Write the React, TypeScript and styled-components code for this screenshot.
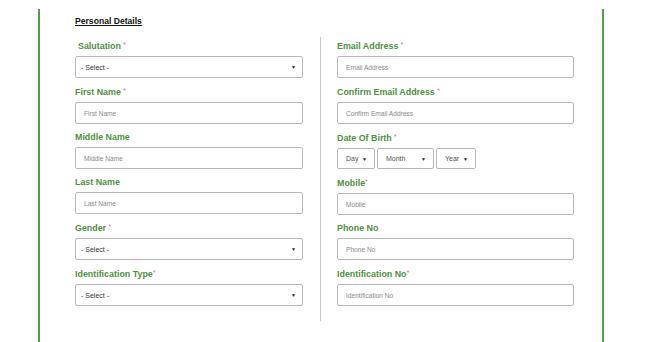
import styled, { createGlobalStyle } from "styled-components";

const GlobalStyle = createGlobalStyle`
  body {
    margin: 0;
    background: #ffffff;
    font-family: "Liberation Sans", Arial, sans-serif;
  }
`;

interface Field {
  label: string;
  required?: "spaced" | "tight";
  kind: "input" | "select" | "dob";
}

const leftFields: Field[] = [
  { label: "Salutation", required: "spaced", kind: "select" },
  { label: "First Name", required: "spaced", kind: "input" },
  { label: "Middle Name", kind: "input" },
  { label: "Last Name", kind: "input" },
  { label: "Gender", required: "spaced", kind: "select" },
  { label: "Identification Type", required: "tight", kind: "select" },
];

const rightFields: Field[] = [
  { label: "Email Address", required: "spaced", kind: "input" },
  { label: "Confirm Email Address", required: "spaced", kind: "input" },
  { label: "Date Of Birth", required: "spaced", kind: "dob" },
  { label: "Mobile", required: "tight", kind: "input" },
  { label: "Phone No", kind: "input" },
  { label: "Identification No", required: "tight", kind: "input" },
];

const dobParts = [
  { text: "Day", width: 38 },
  { text: "Month", width: 57 },
  { text: "Year", width: 40 },
];

const FieldGroup = ({ field, indent }: { field: Field; indent?: boolean }) => (
  <Group>
    <Label indent={indent}>
      {field.label}
      {field.required && (
        <Star>{field.required === "spaced" ? " *" : "*"}</Star>
      )}
    </Label>
    {field.kind === "input" && <TextInput placeholder={field.label} />}
    {field.kind === "select" && (
      <SelectBox>
        <SelectText>- Select -</SelectText>
        <Caret>▼</Caret>
      </SelectBox>
    )}
    {field.kind === "dob" && (
      <DobRow>
        {dobParts.map((part) => (
          <DobSelect key={part.text} style={{ width: part.width }}>
            <DobText>{part.text}</DobText>
            <Caret>▼</Caret>
          </DobSelect>
        ))}
      </DobRow>
    )}
  </Group>
);

const App = () => {
  return (
    <>
      <GlobalStyle />
      <Panel>
        <Heading>Personal Details</Heading>
        <Columns>
          <LeftColumn>
            {leftFields.map((f, i) => (
              <FieldGroup key={f.label} field={f} indent={i === 0} />
            ))}
          </LeftColumn>
          <Divider />
          <RightColumn>
            {rightFields.map((f) => (
              <FieldGroup key={f.label} field={f} />
            ))}
          </RightColumn>
        </Columns>
      </Panel>
    </>
  );
};

export default App;

const Panel = styled.div`
  margin: 9px 0 0 38px;
  width: 527px;
  min-height: 333px;
  border-left: 2px solid #5a9a4e;
  border-right: 2px solid #5a9a4e;
  padding: 7px 0 0 35px;
  box-sizing: content-box;
  display: flex;
  flex-direction: column;
`;

const Heading = styled.div`
  font-size: 8.6px;
  line-height: 11px;
  font-weight: bold;
  color: #111;
  text-decoration: underline;
  margin-bottom: 10px;
`;

const Columns = styled.div`
  display: flex;
  align-items: stretch;
`;

const LeftColumn = styled.div`
  width: 228px;
  padding: 2px 0 15px;
  display: flex;
  flex-direction: column;
  gap: 7px;
`;

const RightColumn = styled(LeftColumn)`
  width: 237px;
`;

const Divider = styled.div`
  width: 1px;
  background: #c8c8c8;
  margin: 0 16px 0 17px;
`;

const Group = styled.div`
  display: flex;
  flex-direction: column;
`;

const Label = styled.div<{ indent?: boolean }>`
  font-size: 8.9px;
  line-height: 12px;
  font-weight: bold;
  color: #4f9042;
  margin-bottom: 4px;
  padding-left: ${({ indent }) => (indent ? "3px" : "0")};
  white-space: pre;
`;

const Star = styled.span`
  color: #e07a7a;
  font-weight: normal;
  font-size: 7.5px;
  vertical-align: 2px;
`;

const TextInput = styled.input`
  height: 22px;
  box-sizing: border-box;
  border: 1px solid #b9b9b9;
  border-radius: 2px;
  padding: 0 8px;
  font-family: "Liberation Sans", Arial, sans-serif;
  font-size: 6.6px;
  outline: none;
  &::placeholder {
    color: #8a8a8a;
  }
`;

const SelectBox = styled.div`
  height: 22px;
  box-sizing: border-box;
  border: 1px solid #b9b9b9;
  border-radius: 2px;
  padding: 0 6px 0 5px;
  display: flex;
  align-items: center;
  justify-content: space-between;
`;

const SelectText = styled.span`
  font-size: 7px;
  color: #333;
`;

const Caret = styled.span`
  font-size: 5px;
  color: #222;
`;

const DobRow = styled.div`
  display: flex;
  gap: 2px;
`;

const DobSelect = styled.div`
  height: 21px;
  box-sizing: border-box;
  border: 1px solid #b9b9b9;
  border-radius: 2px;
  padding: 0 7px 0 8px;
  display: flex;
  align-items: center;
  justify-content: space-between;
`;

const DobText = styled.span`
  font-size: 7px;
  color: #555;
`;
